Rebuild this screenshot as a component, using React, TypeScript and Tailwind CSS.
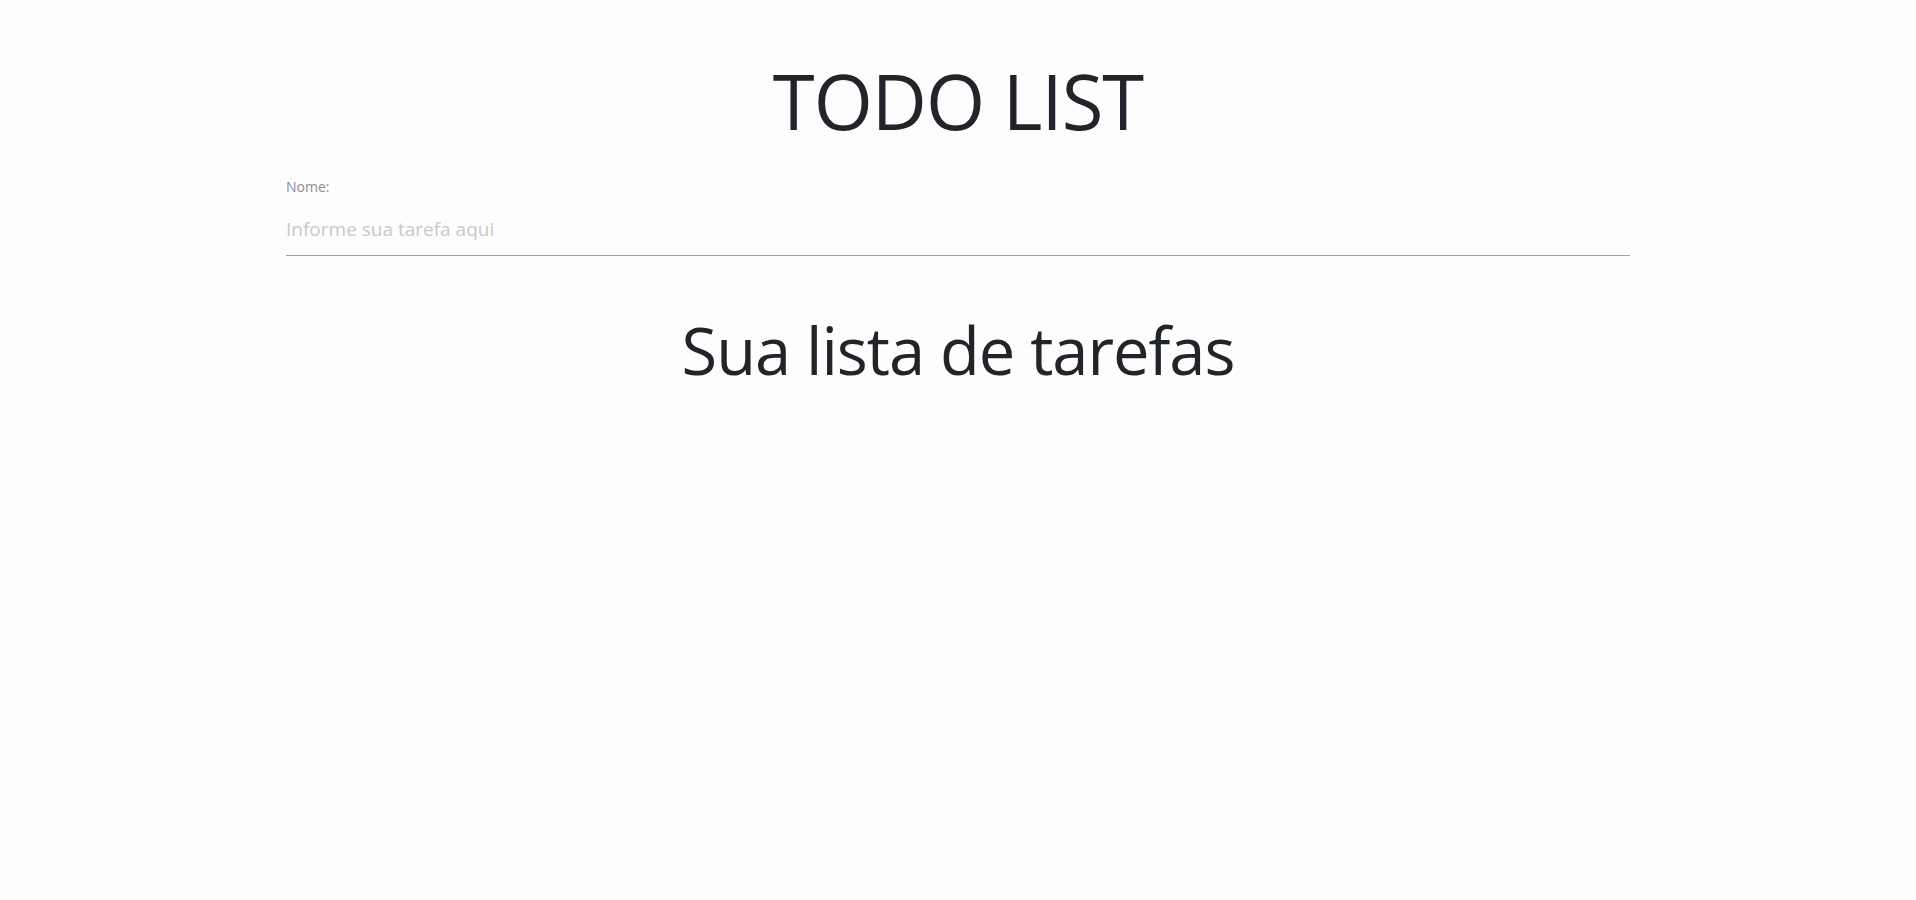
import React from "react";

export default function App() {
  return (
    <div className="min-h-[900px] w-full bg-[#fdfdfd] text-[#212529]" style={{ fontFamily: '"Open Sans", "Noto Sans", sans-serif' }}>
      <div className="mx-auto w-[1344px] pt-[55px]">
        <h1 className="text-center text-[76px] font-normal leading-[1.2] tracking-[-1px]">TODO LIST</h1>
        <div className="mt-[31px] flex flex-col">
          <label className="text-[14px] leading-[20px] text-[#8a8f94]">Nome:</label>
          <input
            type="text"
            placeholder="Informe sua tarefa aqui"
            className="mt-[19px] w-full border-0 border-b border-[#a0a0a0] bg-transparent pb-[13px] text-[19px] leading-[26px] text-[#212529] outline-none placeholder:text-[#c9c9c9]"
          />
        </div>
        <h2 className="mt-[55px] text-center text-[65px] font-normal leading-[1.2] tracking-[-1px]">Sua lista de tarefas</h2>
      </div>
    </div>
  );
}
